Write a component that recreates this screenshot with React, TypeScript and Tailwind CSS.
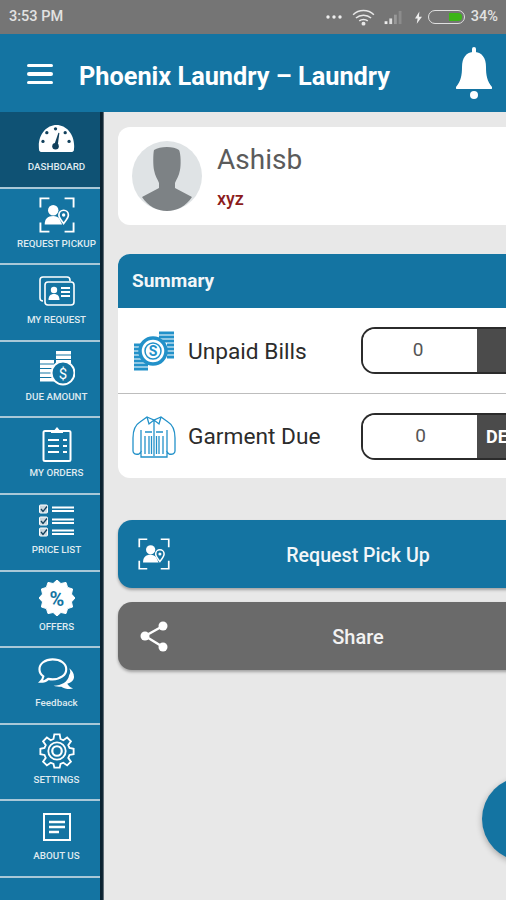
import type { ReactNode } from 'react';

const Gauge = () => (
  <svg viewBox="0 0 38 30" className="h-[29px] w-[37px]">
    <path d="M1 27C-1 12 8 1 19 1s20 11 18 26c0 1-1 2-2 2H3c-1 0-2-1-2-2z" fill="#fff" />
    <g fill="#12405c">
      <circle cx="9" cy="9" r="1.7" /><circle cx="18" cy="5" r="1.7" /><circle cx="28" cy="9" r="1.7" />
      <circle cx="5" cy="18" r="1.7" /><circle cx="32" cy="18" r="1.7" /><circle cx="18" cy="23" r="3.4" />
      <path d="M16.5 22L21 9l1 .4L20 24z" />
    </g>
  </svg>
);

const PickupIcon = ({ className }: { className: string }) => (
  <svg viewBox="0 0 38 38" className={className} fill="none">
    <path d="M1.5 11V1.5H11M27 1.5h9.5V11M1.5 27v9.500h9.500M27 36.500h9.500V27" stroke="#fff" strokeWidth="2" />
    <circle cx="15" cy="14" r="5.500" fill="#fff" />
    <path d="M6 29c0-6 3-9 9-9 3 0 5 1 6.500 3l3 6z" fill="#fff" />
    <path d="M26 28c-3-4-5-6-5-9a5 5 0 0110 0c0 3-2 5-5 9z" stroke="#fff" strokeWidth="1.800" />
    <circle cx="26" cy="19" r="1.800" fill="#fff" />
  </svg>
);

const RequestIcon = () => (
  <svg viewBox="0 0 36 30" className="h-[30px] w-[36px]" fill="none">
    <path d="M4 25c-2 0-3-1-3-3V4c0-2 1-3 3-3h24c2 0 3 1 3 3v1" stroke="#fff" strokeWidth="1.600" />
    <rect x="6" y="6" width="29" height="23" rx="3" stroke="#fff" strokeWidth="1.600" />
    <circle cx="15" cy="14" r="3.200" fill="#fff" />
    <path d="M9.500 24c0-4 2-6 5.500-6s5.500 2 5.500 6z" fill="#fff" />
    <path d="M22 12h9M22 16h9M22 20h9" stroke="#fff" strokeWidth="1.800" />
  </svg>
);

const CoinsIcon = () => (
  <svg viewBox="0 0 36 36" className="h-[36px] w-[36px]" fill="none">
    <g fill="#fff">
      <rect x="17" y="1" width="15" height="3.500" /><rect x="17" y="5.500" width="15" height="3.500" />
      <rect x="17" y="10" width="15" height="3.500" />
      <rect x="1" y="10" width="14" height="3.500" /><rect x="1" y="14.500" width="14" height="3.500" />
      <rect x="1" y="19" width="14" height="3.500" /><rect x="1" y="23.500" width="14" height="3.500" />
      <rect x="1" y="28" width="14" height="3.500" />
    </g>
    <circle cx="24" cy="23" r="11.500" fill="#1474a2" stroke="#fff" strokeWidth="2" />
    <text x="24" y="28.500" textAnchor="middle" fontSize="15" fill="#fff" fontFamily="Roboto, sans-serif">$</text>
  </svg>
);

const OrdersIcon = () => (
  <svg viewBox="0 0 30 36" className="h-[36px] w-[30px]" fill="none">
    <rect x="1.500" y="5" width="27" height="30" rx="1.500" stroke="#fff" strokeWidth="2" />
    <path d="M9 7V4h3.500L15 1l2.500 3H21v3z" fill="#fff" />
    <path d="M6 14h11M6 20h11M6 26h11M21 14h4M21 20h4M21 26h4" stroke="#fff" strokeWidth="2" />
  </svg>
);

const PriceListIcon = () => (
  <svg viewBox="0 0 38 34" className="h-[34px] w-[38px]" fill="none">
    {[1, 13, 24].map((y) => (
      <g key={y}>
        <rect x="1.500" y={y} width="8" height="8" rx="1" fill="#c9d6de" stroke="#fff" />
        <path d={`M3 ${y + 4}l2 2.500 4-5`} stroke="#12405c" strokeWidth="1.300" />
        <path d={`M14 ${y + 2.500}h22M14 ${y + 6}h22`} stroke="#fff" strokeWidth="1.800" />
      </g>
    ))}
  </svg>
);

const OfferIcon = () => {
  const spikes = Array.from({ length: 24 }, (_, i) => {
    const r = i % 2 ? 15 : 18;
    const a = (i * Math.PI) / 12;
    return `${(18 + r * Math.sin(a)).toFixed(1)},${(18 - r * Math.cos(a)).toFixed(1)}`;
  });
  return (
    <svg viewBox="0 0 36 36" className="h-[36px] w-[36px]">
      <polygon points={spikes.join(' ')} fill="#fff" stroke="#fff" strokeLinejoin="round" />
      <text x="18" y="25.500" textAnchor="middle" fontSize="20" fontWeight="700" fill="#1474a2" fontFamily="Roboto, sans-serif">%</text>
    </svg>
  );
};

const ChatIcon = () => (
  <svg viewBox="0 0 38 34" className="h-[34px] w-[37px]" fill="none">
    <path d="M30 27c2 3 4 4 6 5-4 1-9 0-12-2-3 0-6 0-8-1 8 0 15-4 16-11 2-3 1-5 0-7 3 2 5 5 5 9 0 3-3 6-7 7z" fill="#fff" />
    <path d="M15 2C7 2 1.500 6.500 1.500 12c0 3 1.500 5.500 4 7.500-.3 2-1.500 4-3 5.500 3 0 6-1 8-3 1.500.3 3 .5 4.500.5 8 0 14-4.500 14-10.500S23 2 15 2z" stroke="#fff" strokeWidth="2.200" />
  </svg>
);

const GearIcon = () => (
  <svg viewBox="0 0 24 24" className="h-[38px] w-[38px]" fill="none" stroke="#fff" strokeWidth="1.150">
    <path d="M10.300 1.500h3.400l.5 2.900 1.800.8 2.400-1.700 2.400 2.400-1.700 2.400.8 1.800 2.600.5v3.400l-2.600.5-.8 1.800 1.700 2.400-2.400 2.400-2.400-1.700-1.800.8-.5 2.300h-3.400l-.5-2.300-1.800-.8-2.400 1.700-2.400-2.400 1.700-2.400-.8-1.800-2.600-.5v-3.400l2.600-.5.8-1.800-1.700-2.400 2.400-2.400 2.400 1.700 1.800-.8z" />
    <circle cx="12" cy="12" r="5.500" />
    <circle cx="12" cy="12" r="3" strokeWidth="1.400" />
  </svg>
);

const AboutIcon = () => (
  <svg viewBox="0 0 28 28" className="h-[28px] w-[28px]" fill="none" stroke="#fff">
    <rect x="1" y="1" width="26" height="26" strokeWidth="2" />
    <path d="M6 9h16M6 14h16M6 19h10" strokeWidth="2.400" />
  </svg>
);

const menu: { label: string; icon: ReactNode; active?: boolean }[] = [
  { label: 'DASHBOARD', icon: <Gauge />, active: true },
  { label: 'REQUEST PICKUP', icon: <PickupIcon className="h-[38px] w-[36px]" /> },
  { label: 'MY REQUEST', icon: <RequestIcon /> },
  { label: 'DUE AMOUNT', icon: <CoinsIcon /> },
  { label: 'MY ORDERS', icon: <OrdersIcon /> },
  { label: 'PRICE LIST', icon: <PriceListIcon /> },
  { label: 'OFFERS', icon: <OfferIcon /> },
  { label: 'Feedback', icon: <ChatIcon /> },
  { label: 'SETTINGS', icon: <GearIcon /> },
  { label: 'ABOUT US', icon: <AboutIcon /> },
];

const BillsIcon = () => (
  <svg viewBox="0 0 44 44" className="h-[44px] w-[44px]" fill="none">
    <g stroke="#2291c9" strokeWidth="3">
      <path d="M27 4h15M27 8h15M27 12h15M35 16h7M35 20h7M35 24h7M35 28h7" />
      <path d="M2 16h8M2 20h7M2 24h7M2 28h8M2 32h14M2 36h14M2 40h14" />
    </g>
    <circle cx="21" cy="22" r="13" stroke="#2291c9" strokeWidth="3.500" fill="#fff" />
    <circle cx="21" cy="22" r="8" stroke="#2291c9" strokeWidth="1.500" />
    <text x="21" y="27" textAnchor="middle" fontSize="14" fontWeight="700" fill="#2291c9" fontFamily="Roboto, sans-serif">S</text>
  </svg>
);

const JacketIcon = () => (
  <svg viewBox="0 0 44 44" className="h-[44px] w-[44px]" fill="none" stroke="#2291c9" strokeWidth="1.300">
    <path d="M15 3l7 3 7-3 7 5c5 3 7 9 7 16v13c0 2-2 4-6 3l-2-2v5H9v-5l-2 2c-4 1-6-1-6-3V24c0-7 2-13 7-16z" />
    <path d="M15 3l2 7 5-4 5 4 2-7M22 6v36M9 38V16M35 38V16M13 18h7M24 18h7M13 22v18M17 22v18M27 22v18M31 22v18M19.500 22v18M24.500 22v18" />
  </svg>
);

const CountRow = ({ label, icon, action, inputClass, rowClass }: { label: string; icon: ReactNode; action?: string; inputClass: string; rowClass: string }) => (
  <div className={`flex items-center pl-[14px] ${rowClass}`}>
    <div className="flex w-[56px] shrink-0">{icon}</div>
    <span className="w-[173px] shrink-0 pt-[3px] text-[22.7px] text-[#2c2c2c]">{label}</span>
    <div className="flex h-[47px] w-[220px] shrink-0 overflow-hidden rounded-l-[14px] border-2 border-r-0 border-[#2b2b2b]">
      <div className={`flex w-[114px] items-center justify-center bg-white text-[19px] text-[#555] ${inputClass}`}>0</div>
      <div className="flex flex-1 items-center bg-[#4b4b4b] pl-[9px] text-[18px] font-bold text-white">{action}</div>
    </div>
  </div>
);

export default function App() {
  return (
    <div className="relative flex h-[900px] w-[506px] flex-col overflow-hidden bg-[#e8e8e8] font-['Roboto',sans-serif]">
      <div className="flex h-[34px] shrink-0 items-center bg-[#757575] pl-[9px] pr-[8px] text-[#e2e2e2]">
        <span className="text-[14.5px] font-medium">3:53 PM</span>
        <div className="ml-auto flex items-center">
          <svg viewBox="0 0 16 4" className="h-[4px] w-[16px]" fill="#eee">
            <circle cx="2" cy="2" r="1.700" /><circle cx="8" cy="2" r="1.700" /><circle cx="14" cy="2" r="1.700" />
          </svg>
          <svg viewBox="0 0 24 18" className="ml-[10px] h-[17px] w-[23px]" fill="none" stroke="#e8e8e8" strokeWidth="1.600">
            <path d="M1 6c6-6 16-6 22 0M4 9.500c4.500-4 11.500-4 16 0M7.500 12.500c2.500-2 6.500-2 9 0" />
            <circle cx="12" cy="15.500" r="1.300" fill="#e8e8e8" />
          </svg>
          <svg viewBox="0 0 20 16" className="ml-[9px] h-[15px] w-[20px]">
            <rect x="0" y="12" width="3" height="3" fill="#eee" /><rect x="5" y="9" width="3" height="6" fill="#ddd" />
            <rect x="10" y="5" width="3" height="10" fill="#999" /><rect x="15" y="1" width="3" height="14" fill="#8c8c8c" />
          </svg>
          <svg viewBox="0 0 8 14" className="ml-[11px] h-[13px] w-[7px]" fill="#eee"><path d="M5 0L0 8h3l-1 6 6-8H4.500z" /></svg>
          <div className="ml-[6px] flex h-[14px] w-[37px] justify-end overflow-hidden rounded-full border border-[#e0e0e0]">
            <div className="my-[2px] mr-[2px] w-[13px] rounded-r-full bg-[#3cb518]" />
          </div>
          <span className="ml-[6px] text-[14.5px] font-medium">34%</span>
        </div>
      </div>

      <header className="flex h-[78px] shrink-0 items-center bg-[#1474a2] pl-[27px] pr-[14px]">
        <div className="mt-[2px] flex w-[26px] flex-col gap-[5px]">
          <span className="h-[3.5px] rounded-sm bg-white" />
          <span className="h-[3.5px] rounded-sm bg-white" />
          <span className="h-[3.5px] rounded-sm bg-white" />
        </div>
        <h1 className="ml-[26px] pt-[7px] text-[25.3px] font-bold text-white">Phoenix Laundry – Laundry</h1>
        <svg viewBox="0 0 36 52" className="ml-auto h-[52px] w-[36px]" fill="#fff">
          <rect x="16" y="0" width="4" height="8" rx="2" />
          <path d="M18 5c8 0 12 6 12 15 0 8 1 14 6 20 .5 1 0 2-1 2H1c-1 0-1.500-1-1-2 5-6 6-12 6-20C6 11 10 5 18 5z" />
          <circle cx="18" cy="48" r="4" />
        </svg>
      </header>

      <div className="flex min-h-0 flex-1">
        <nav className="w-[100px] shrink-0 bg-[#1474a2]">
          {menu.map((item) => (
            <div
              key={item.label}
              className={`flex h-[76.6px] flex-col items-center border-b-2 border-[#a9c8d8] pl-[13px] ${item.active ? 'bg-[#0f5274]' : ''}`}
            >
              <div className="flex h-[52px] items-center justify-center">{item.icon}</div>
              <span className="-mt-[4px] whitespace-nowrap text-[9.8px] leading-[13px] font-medium text-[#dfeaf0]">{item.label}</span>
            </div>
          ))}
        </nav>
        <div className="w-[4px] shrink-0 bg-gradient-to-r from-[#0b2230] from-60% to-[#8a9297]" />

        <main className="flex w-[480px] shrink-0 flex-col pl-[14px] pt-[15px]">
          <section className="flex h-[98px] w-[480px] shrink-0 items-center rounded-[12px] bg-white pl-[14px]">
            <svg viewBox="0 0 70 70" className="h-[70px] w-[70px] shrink-0">
              <circle cx="35" cy="35" r="35" fill="#dfe3e5" />
              <path d="M22 9c6-4 20-4 25 0 2 4 2 16 1 20-1 6-4 10-5 13v5l17 9c-6 9-15 14-25 14s-19-5-25-14l17-9v-5c-1-3-4-7-5-13-1-4-1-16 0-20z" fill="#7d8285" />
            </svg>
            <div className="ml-[15px] flex flex-col">
              <span className="text-[28px] leading-[36px] text-[#5b5b5b]">Ashisb</span>
              <span className="mt-[10px] text-[18px] leading-[22px] font-medium text-[#8c1c1c]">xyz</span>
            </div>
          </section>

          <section className="mt-[29px] w-[480px] shrink-0 overflow-hidden rounded-[12px] bg-white">
            <div className="flex h-[54px] items-center bg-[#1474a2] pl-[14px] pt-[1px] text-[19px] font-bold text-[#f2f6f8]">Summary</div>
            <CountRow label="Unpaid Bills" icon={<BillsIcon />} inputClass="pr-[4px]" rowClass="h-[85px]" />
            <div className="h-[1px] bg-[#bdbdbd]" />
            <CountRow label="Garment Due" icon={<JacketIcon />} action="DETAILS" inputClass="pl-[1px]" rowClass="h-[84px]" />
          </section>

          <button className="mt-[42px] flex h-[68px] w-[480px] shrink-0 items-center rounded-[14px] bg-[#1474a2] pl-[20px] shadow-[0_2px_3px_rgba(0,0,0,0.3)]">
            <PickupIcon className="h-[32px] w-[32px]" />
            <span className="flex-1 pr-[52px] pt-[4px] text-center text-[19.6px] font-medium text-[#f2f6f8]">Request Pick Up</span>
          </button>

          <button className="mt-[14px] flex h-[68px] w-[480px] shrink-0 items-center rounded-[14px] bg-[#6a6a6a] pl-[20px] shadow-[0_2px_3px_rgba(0,0,0,0.3)]">
            <svg viewBox="0 0 32 32" className="h-[32px] w-[32px]" fill="#fff" stroke="#fff" strokeWidth="2.500">
              <path d="M7 16L25 6M7 16l18 11" fill="none" />
              <circle cx="7" cy="16" r="4.500" stroke="none" />
              <circle cx="25" cy="6" r="4.500" stroke="none" />
              <circle cx="25" cy="27" r="4.500" stroke="none" />
            </svg>
            <span className="flex-1 pr-[52px] pt-[2px] text-center text-[20px] font-medium text-[#f2f2f2]">Share</span>
          </button>
        </main>
      </div>

      <div className="absolute left-[482px] top-[777px] h-[84px] w-[84px] rounded-full bg-[#1474a2] shadow-[0_2px_6px_rgba(0,0,0,0.3)]" />
    </div>
  );
}
